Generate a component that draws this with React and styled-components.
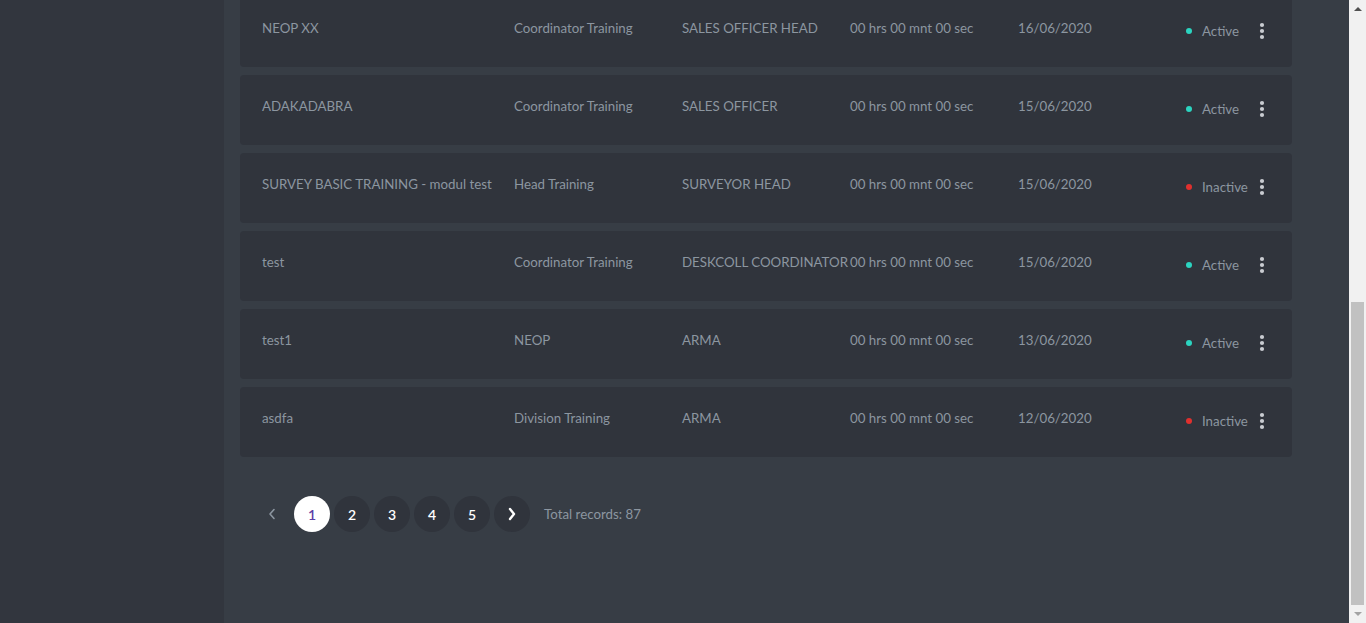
import { useLayoutEffect, useRef } from "react";
import styled, { createGlobalStyle } from "styled-components";

const GlobalStyle = createGlobalStyle`
  html, body {
    margin: 0;
    padding: 0;
    height: 100%;
    overflow: hidden;
    background: #373d45;
  }
  body {
    font-family: Lato, "Open Sans", sans-serif;
  }
`;

const Layout = styled.div`
  display: flex;
  height: 100vh;
`;

const Sidebar = styled.aside`
  width: 224px;
  flex-shrink: 0;
  background: #32363e;
`;

const Viewport = styled.div`
  flex: 1;
  overflow-y: auto;
  scrollbar-width: none;
  &::-webkit-scrollbar {
    display: none;
  }
`;

const Main = styled.main`
  padding: 0 57px 91px 16px;
`;

/* window scrollbar, drawn: page is scrolled to its end */
const ScrollRail = styled.div`
  width: 17px;
  flex-shrink: 0;
  background: #f1f1f1;
  display: flex;
  flex-direction: column;
  align-items: center;
`;

const RailArrow = styled.div`
  height: 17px;
  display: flex;
  align-items: center;
  justify-content: center;
`;

const RailSpace = styled.div`
  flex: 1;
  width: 100%;
  display: flex;
  flex-direction: column;
  justify-content: flex-end;
  align-items: center;
  padding-bottom: 1px;
`;

const Thumb = styled.div`
  width: 13px;
  height: 303px;
  background: #c1c1c1;
`;

const List = styled.div`
  display: flex;
  flex-direction: column;
  gap: 8px;
`;

const Row = styled.div`
  display: grid;
  grid-template-columns: 252px 168px 168px 168px 1fr 70px 12px;
  padding: 22px 24px 0 22px;
  box-sizing: border-box;
  height: 70px;
  background: #30343c;
  border-radius: 4px;
  color: #8c96a0;
  font-size: 13.3px;
  line-height: 18px;
  align-items: start;
`;

const Cell = styled.div`
  white-space: nowrap;
`;

const Status = styled.div`
  display: flex;
  align-items: center;
  gap: 10px;
  margin-top: 3px;
`;

const Dot = styled.span`
  width: 6px;
  height: 6px;
  border-radius: 50%;
  background: ${(props) => (props.active ? "#2bd4c0" : "#e0302e")};
`;

const Kebab = styled.div`
  display: flex;
  justify-content: center;
  margin-top: 3px;
`;

const Pagination = styled.div`
  display: flex;
  align-items: center;
  gap: 4px;
  margin-top: 39px;
  padding-left: 14px;
`;

const PageButton = styled.div`
  width: 36px;
  height: 36px;
  border-radius: 50%;
  display: flex;
  align-items: center;
  justify-content: center;
  font-size: 14px;
  font-weight: 600;
  background: ${(props) =>
    props.active ? "#ffffff" : props.ghost ? "transparent" : "#30343c"};
  color: ${(props) => (props.active ? "#5b3ea6" : "#ffffff")};
`;

const Total = styled.span`
  margin-left: 10px;
  color: #8c96a0;
  font-size: 13.3px;
`;

const rows = [
  ["NEOP XX", "Coordinator Training", "SALES OFFICER HEAD", "00 hrs 00 mnt 00 sec", "16/06/2020", true],
  ["ADAKADABRA", "Coordinator Training", "SALES OFFICER", "00 hrs 00 mnt 00 sec", "15/06/2020", true],
  ["SURVEY BASIC TRAINING - modul test", "Head Training", "SURVEYOR HEAD", "00 hrs 00 mnt 00 sec", "15/06/2020", false],
  ["test", "Coordinator Training", "DESKCOLL COORDINATOR", "00 hrs 00 mnt 00 sec", "15/06/2020", true],
  ["test1", "NEOP", "ARMA", "00 hrs 00 mnt 00 sec", "13/06/2020", true],
  ["asdfa", "Division Training", "ARMA", "00 hrs 00 mnt 00 sec", "12/06/2020", false],
];

const DotsIcon = () => (
  <svg width="6" height="18" viewBox="0 0 6 18">
    <circle cx="3" cy="3" r="2.1" fill="#c9ccd1" />
    <circle cx="3" cy="9" r="2.1" fill="#c9ccd1" />
    <circle cx="3" cy="15" r="2.1" fill="#c9ccd1" />
  </svg>
);

const Chevron = ({ dir, color, width }) => (
  <svg width="10" height="14" viewBox="0 0 10 14">
    <path
      d={dir === "left" ? "M7 2.5 L3 7 L7 11.5" : "M3 2 L7 7 L3 12"}
      fill="none"
      stroke={color}
      strokeWidth={width}
      strokeLinecap="round"
      strokeLinejoin="round"
    />
  </svg>
);

const Triangle = ({ up, color }) => (
  <svg width="8" height="5" viewBox="0 0 8 5">
    <path d={up ? "M0 5 L4 1 L8 5 Z" : "M0 0 L4 4 L8 0 Z"} fill={color} />
  </svg>
);

const App = () => {
  const viewportRef = useRef(null);

  useLayoutEffect(() => {
    const el = viewportRef.current;
    if (el) el.scrollTop = el.scrollHeight;
  }, []);

  return (
    <>
      <GlobalStyle />
      <Layout>
        <Sidebar />
        <Viewport ref={viewportRef}>
          <Main>
            <List>
              {rows.map(([name, type, role, duration, date, active]) => (
                <Row key={name}>
                  <Cell>{name}</Cell>
                  <Cell>{type}</Cell>
                  <Cell>{role}</Cell>
                  <Cell>{duration}</Cell>
                  <Cell>{date}</Cell>
                  <Status>
                    <Dot active={active} />
                    {active ? "Active" : "Inactive"}
                  </Status>
                  <Kebab>
                    <DotsIcon />
                  </Kebab>
                </Row>
              ))}
            </List>
            <Pagination>
              <PageButton ghost>
                <Chevron dir="left" color="#8c96a0" width={1.6} />
              </PageButton>
              <PageButton active>1</PageButton>
              <PageButton>2</PageButton>
              <PageButton>3</PageButton>
              <PageButton>4</PageButton>
              <PageButton>5</PageButton>
              <PageButton>
                <Chevron dir="right" color="#ffffff" width={2.4} />
              </PageButton>
              <Total>Total records: 87</Total>
            </Pagination>
          </Main>
        </Viewport>
        <ScrollRail>
          <RailArrow>
            <Triangle up color="#505050" />
          </RailArrow>
          <RailSpace>
            <Thumb />
          </RailSpace>
          <RailArrow>
            <Triangle color="#a3a3a3" />
          </RailArrow>
        </ScrollRail>
      </Layout>
    </>
  );
};

export default App;
